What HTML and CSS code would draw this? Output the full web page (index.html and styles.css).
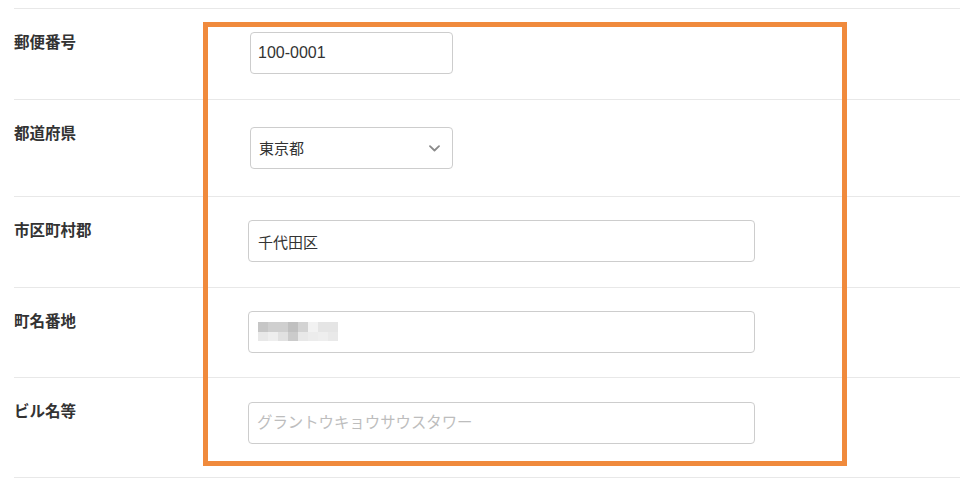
FILE: index.html
```html
<!DOCTYPE html>
<html lang="ja">
<head>
<meta charset="utf-8">
<title>住所入力</title>
<link rel="stylesheet" href="styles.css">
</head>
<body>
<div class="page">
  <form class="form">
    <div class="row">
      <div class="label">郵便番号</div>
      <div class="field field--r1">
        <input class="input input--short input--num" type="text" value="100-0001">
      </div>
    </div>
    <div class="row">
      <div class="label">都道府県</div>
      <div class="field field--r2">
        <div class="select-wrap">
          <select class="input select">
            <option>東京都</option>
          </select>
          <svg class="chevron" width="11" height="7" viewBox="0 0 11 7"><path d="M1 1.2 L5.5 5.5 L10 1.2" fill="none" stroke="#8a8a8a" stroke-width="1.8" stroke-linecap="round" stroke-linejoin="round"/></svg>
        </div>
      </div>
    </div>
    <div class="row">
      <div class="label">市区町村郡</div>
      <div class="field field--r1">
        <input class="input input--long" type="text" value="千代田区">
      </div>
    </div>
    <div class="row">
      <div class="label">町名番地</div>
      <div class="field field--r4">
        <div class="masked">
          <input class="input input--long" type="text" value="">
          <div class="mosaic">
            <span class="m a1"></span><span class="m a2"></span><span class="m a2"></span><span class="m a3"></span><span class="m a4"></span><span class="m a5"></span><span class="m a6"></span><span class="m a6"></span>
            <span class="m b1"></span><span class="m b2"></span><span class="m b3"></span><span class="m b4"></span><span class="m b1"></span><span class="m b5"></span><span class="m b2"></span><span class="m b6"></span>
          </div>
        </div>
      </div>
    </div>
    <div class="row row--last">
      <div class="label">ビル名等</div>
      <div class="field field--r5">
        <input class="input input--long input--ph" type="text" placeholder="グラントウキョウサウスタワー">
      </div>
    </div>
  </form>
  <div class="highlight"></div>
</div>
</body>
</html>
```

FILE: styles.css
```css
* { box-sizing: border-box; }
html, body { margin: 0; padding: 0; background: #fff; }
body {
  font-family: "Liberation Sans", "Noto Sans CJK JP", sans-serif;
  color: #333;
}
.page {
  position: relative;
  width: 970px;
  height: 485px;
  overflow: hidden;
}
.form {
  margin: 8px 0 0 14px;
  width: 946px;
}
.row {
  display: flex;
  align-items: flex-start;
  border-top: 1px solid #e8e8e8;
}
.row--last { border-bottom: 1px solid #e8e8e8; }
.label {
  width: 234px;
  flex: none;
  padding: 24px 0 0 0;
  font-size: 15.5px;
  line-height: 20px;
  font-weight: 700;
  color: #333;
}
.field { flex: 1; display: flex; }
.field--r1 { padding: 23px 0 25px; }
.field--r2 { padding: 27px 0 27px; }
.field--r4 { padding: 23px 0 24px; }
.field--r5 { padding: 24px 0 33px; }
.input {
  display: block;
  height: 42px;
  margin: 0;
  border: 1px solid #cdcdcd;
  border-radius: 4px;
  padding: 0 9px;
  font-family: "Liberation Sans", "Noto Sans CJK JP", sans-serif;
  font-size: 15px;
  color: #333;
  background: #fff;
  outline: none;
}
.input::placeholder { color: #bdbdbd; }
.input--num { font-size: 16px; padding-left: 7px; }
.input--ph { font-size: 15.4px; padding-left: 8px; }
.input--short { width: 203px; margin-left: 2px; }
.input--long { width: 507px; }
.select-wrap { position: relative; margin-left: 2px; }
.select {
  width: 203px;
  appearance: none;
  -webkit-appearance: none;
  padding-left: 8px;
}
.chevron {
  position: absolute;
  right: 13px;
  top: 18px;
}
.masked { position: relative; }
.mosaic {
  position: absolute;
  left: 10px;
  top: 11px;
  display: grid;
  grid-template-columns: repeat(8, 10px);
  grid-template-rows: 10px 9px;
}
.m { display: block; }
.a1 { background: #c6c6c6; }
.a2 { background: #cfcfcf; }
.a3 { background: #c0c0c0; }
.a4 { background: #d3d3d3; }
.a5 { background: #f2f2f2; }
.a6 { background: #e5e5e5; }
.b1 { background: #e8e8e8; }
.b2 { background: #eeeeee; }
.b3 { background: #e1e1e1; }
.b4 { background: #cbcbcb; }
.b5 { background: #ececec; }
.b6 { background: #e9e9e9; }
.highlight {
  position: absolute;
  left: 203px;
  top: 22px;
  width: 644px;
  height: 444px;
  border: 5px solid #f08a3c;
  pointer-events: none;
}
```
